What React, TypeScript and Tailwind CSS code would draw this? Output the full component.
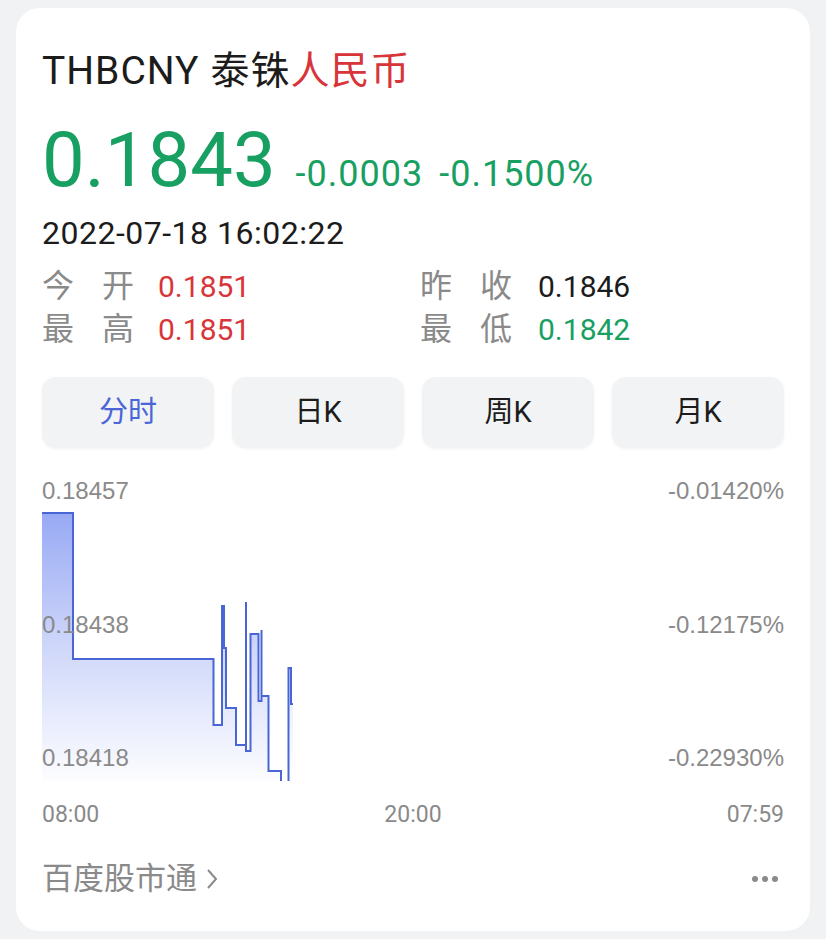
import React from 'react';

const FONT = { fontFamily: 'Roboto, "Noto Sans CJK SC", sans-serif' };
const LABEL_FONT = { fontFamily: '"Liberation Sans", Arial, sans-serif' };

const stats = [
  { left: ['今', '开'], leftValue: '0.1851', leftColor: 'text-[#d8353b]', right: ['昨', '收'], rightValue: '0.1846', rightColor: 'text-[#1c1c1c]' },
  { left: ['最', '高'], leftValue: '0.1851', leftColor: 'text-[#d8353b]', right: ['最', '低'], rightValue: '0.1842', rightColor: 'text-[#17a062]' },
];

const tabs = ['分时', '日K', '周K', '月K'];

// step line of the intraday price, in chart coordinates
const LINE_A = 'M0,42 H31 V188 H171.5 V254 H180 V135 H182 V177 H184 V237 H194 V274 H204 V131 V280 H208.5 V163 H216.5 V230 H219.5 V159 V225 H226.5 V300 H239 V310';
const LINE_B = 'M246.5,310 V197 H249 V233 H251';

const StatLabel = ({ chars }: { chars: string[] }) => (
  <div className="flex w-[92px] justify-between text-[32px] text-[#8a8a8a]">
    <span>{chars[0]}</span>
    <span>{chars[1]}</span>
  </div>
);

const Chart = () => (
  <div className="relative mt-[23px] h-[320px]">
    <svg className="absolute inset-0" width="744" height="320" viewBox="0 0 744 320">
      <defs>
        <linearGradient id="fill" x1="0" y1="42" x2="0" y2="316" gradientUnits="userSpaceOnUse">
          <stop offset="0" stopColor="#98a9f4" />
          <stop offset="0.5" stopColor="#d0d8fa" />
          <stop offset="1" stopColor="#ffffff" />
        </linearGradient>
      </defs>
      <path d={`${LINE_A} H0 Z`.replace('M0,42', 'M0,310 V42')} fill="url(#fill)" />
      <path d={`${LINE_B} V310 Z`} fill="url(#fill)" opacity="0.6" />
      <path d={LINE_A} fill="none" stroke="#4a66d6" strokeWidth="2" />
      <path d={LINE_B} fill="none" stroke="#4a66d6" strokeWidth="2" />
    </svg>
    <div style={LABEL_FONT} className="absolute left-0 top-[6px] text-[24px] leading-[28px] text-[#8a8a8a]">0.18457</div>
    <div style={LABEL_FONT} className="absolute left-0 top-[140px] text-[24px] leading-[28px] text-[#8a8a8a]">0.18438</div>
    <div style={LABEL_FONT} className="absolute left-0 top-[273px] text-[24px] leading-[28px] text-[#8a8a8a]">0.18418</div>
    <div style={LABEL_FONT} className="absolute right-0 top-[6px] text-[24px] leading-[28px] text-[#8a8a8a]">-0.01420%</div>
    <div style={LABEL_FONT} className="absolute right-0 top-[140px] text-[24px] leading-[28px] text-[#8a8a8a]">-0.12175%</div>
    <div style={LABEL_FONT} className="absolute right-0 top-[273px] text-[24px] leading-[28px] text-[#8a8a8a]">-0.22930%</div>
  </div>
);

const App = () => {
  return (
    <div style={FONT} className="min-h-screen bg-[#f1f2f4] px-4 py-2">
      <div className="rounded-[24px] bg-white px-[26px] pb-[32px] pt-[41px]">
        {/* Header */}
        <h1 className="text-[39px] leading-[44px] tracking-[1px] text-[#1c1c1c]">
          THBCNY<span className="ml-[11px]">泰铢</span>
          <span className="text-[#d8353b]">人民币</span>
        </h1>

        <div className="mt-[27px] flex items-baseline text-[#17a062]">
          <span className="text-[76px] leading-[80px]">0.1843</span>
          <span className="ml-[20px] text-[36px] tracking-[1px]">-0.0003</span>
          <span className="ml-[16px] text-[36px] tracking-[1px]">-0.1500%</span>
        </div>

        <div className="mt-[12px] text-[32px] leading-[40px] tracking-[0.5px] text-[#1c1c1c]">2022-07-18 16:02:22</div>

        {/* Stats */}
        <div className="mt-[12px]">
          {stats.map((row, i) => (
            <div key={i} className="grid h-[43px] grid-cols-[378px_1fr] items-center text-[30px] leading-[43px]">
              <div className="flex items-center gap-[24px]">
                <StatLabel chars={row.left} />
                <span className={row.leftColor}>{row.leftValue}</span>
              </div>
              <div className="flex items-center gap-[26px]">
                <StatLabel chars={row.right} />
                <span className={row.rightColor}>{row.rightValue}</span>
              </div>
            </div>
          ))}
        </div>

        {/* Period tabs */}
        <div className="mt-[26px] grid grid-cols-4 gap-[18px]">
          {tabs.map((t, i) => (
            <button
              key={t}
              className={`flex h-[71px] items-center justify-center rounded-[14px] bg-[#f2f3f5] text-[29px] shadow-[0_1px_3px_rgba(0,0,0,0.05)] ${
                i === 0 ? 'text-[#4a66d6]' : 'text-[#1c1c1c]'
              }`}
            >
              {t}
            </button>
          ))}
        </div>

        <Chart />

        <div className="mt-[10px] flex justify-between text-[23px] leading-[28px] text-[#8a8a8a]">
          <span>08:00</span>
          <span>20:00</span>
          <span>07:59</span>
        </div>

        {/* Footer */}
        <div className="mt-[30px] flex h-[40px] items-center justify-between text-[#8a8a8a]">
          <div className="flex items-center gap-[9px] text-[31px]">
            <span>百度股市通</span>
            <svg width="12" height="22" viewBox="0 0 12 22">
              <polyline points="2,2 10,11 2,20" fill="none" stroke="#8a8a8a" strokeWidth="2" />
            </svg>
          </div>
          <div className="mr-[6px] flex gap-[4px]">
            <span className="h-[6px] w-[6px] rounded-full bg-[#8a8a8a]" />
            <span className="h-[6px] w-[6px] rounded-full bg-[#8a8a8a]" />
            <span className="h-[6px] w-[6px] rounded-full bg-[#8a8a8a]" />
          </div>
        </div>
      </div>
    </div>
  );
};

export default App;
